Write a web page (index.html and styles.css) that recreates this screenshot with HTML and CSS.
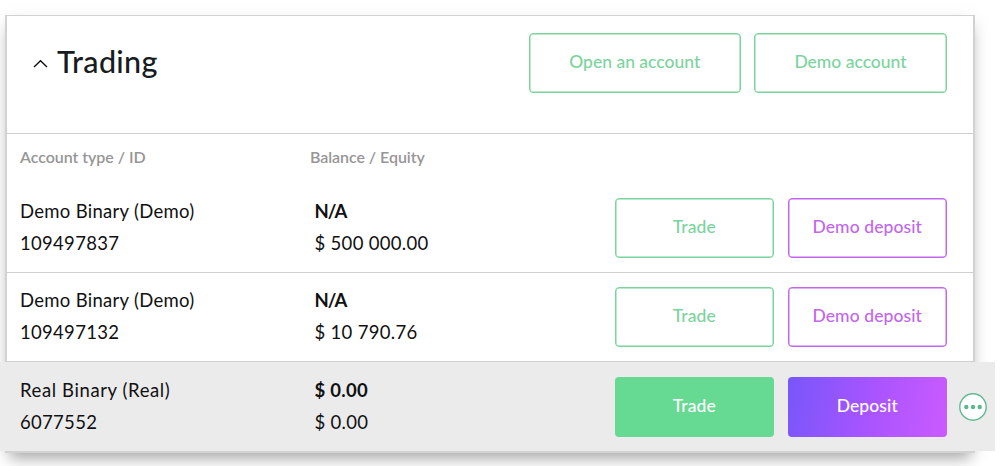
FILE: index.html
```html
<!DOCTYPE html>
<html lang="en">
<head>
<meta charset="UTF-8" />
<meta name="viewport" content="width=device-width, initial-scale=1.0"/>
<title>Trading</title>
<link rel="stylesheet" href="styles.css">
</head>
<body>
<section class="card">
    <header class="card-header">
        <svg class="chevron" width="15" height="9" viewBox="0 0 15 9"><path d="M1 8 L7.5 1.8 L14 8" fill="none" stroke="#111" stroke-width="1.4"/></svg>
        <h1>Trading</h1>
        <button class="btn green open">Open an account</button>
        <button class="btn green demo">Demo account</button>
    </header>
    <div class="labels">
        <span class="label-type">Account type / ID</span>
        <span class="label-balance">Balance / Equity</span>
    </div>
    <div class="row">
        <div class="account"><span class="name">Demo Binary (Demo)</span><br>109497837</div>
        <div class="balance"><b class="na">N/A</b><br>$ 500 000.00</div>
        <button class="btn green">Trade</button>
        <button class="btn purple">Demo deposit</button>
    </div>
    <div class="row second">
        <div class="account"><span class="name">Demo Binary (Demo)</span><br>109497132</div>
        <div class="balance"><b class="na">N/A</b><br>$ 10 790.76</div>
        <button class="btn green">Trade</button>
        <button class="btn purple">Demo deposit</button>
    </div>
    <div class="row active">
        <div class="account"><span class="name real">Real Binary (Real)</span><br>6077552</div>
        <div class="balance"><b>$ 0.00</b><br>$ 0.00</div>
        <button class="btn green-fill">Trade</button>
        <button class="btn gradient">Deposit</button>
        <svg class="more" width="28" height="28" viewBox="0 0 28 28">
            <circle cx="14" cy="14" r="13.2" fill="#fff" stroke="#62b892" stroke-width="1.4"/>
            <g fill="#5db890">
                <circle cx="7.3" cy="14" r="2.2"/>
                <circle cx="14" cy="14" r="2.2"/>
                <circle cx="20.7" cy="14" r="2.2"/>
            </g>
        </svg>
    </div>
</section>
</body>
</html>
```

FILE: styles.css
```css
* {
    box-sizing: border-box;
}
body {
    margin: 0;
    padding: 15px 25px 0 5px;
    height: 466px;
    overflow: hidden;
    background-color: #fff;
    color: #111;
    font-family: Lato, sans-serif;
    font-size: 18.5px;
}
.card {
    width: 970px;
    height: 438px;
    border: 2px solid #d2d2d2;
    border-top-width: 1px;
    background-color: #fff;
    box-shadow: 0 4px 18px rgba(0, 0, 0, 0.08), 0 10px 14px -5px rgba(0, 0, 0, 0.3);
}
.card-header {
    display: flex;
    align-items: flex-start;
    height: 118px;
    padding: 17px 26px 0;
    border-bottom: 1px solid #d0d0d0;
}
.chevron {
    margin: 26px 9px 0 0;
}
h1 {
    margin: 8px auto 0 0;
    font-size: 30.5px;
    line-height: 40px;
    font-weight: 500;
    color: #171c21;
    letter-spacing: 0.3px;
}
.btn {
    width: 159.5px;
    height: 60px;
    margin: 0 0 0 13.5px;
    padding: 0 0 3px;
    border: 1px solid;
    border-radius: 4px;
    background: none;
    box-shadow: inset 0 0 0 0.5px;
    font-family: inherit;
    font-size: 17.5px;
    font-weight: 500;
    letter-spacing: 0.1px;
}
.open {
    width: 212.5px;
    letter-spacing: 0;
}
.demo {
    width: 193px;
    margin-left: 13px;
    letter-spacing: 0;
}
.green {
    color: #7bd49d;
}
.purple {
    color: #c266ee;
}
.green-fill {
    border: 0;
    box-shadow: none;
    background-color: #66d993;
    color: #fff;
}
.gradient {
    border: 0;
    box-shadow: none;
    background: linear-gradient(100deg, #7757fa, #a954ff 52%, #ca5bff);
    color: #fff;
}
.labels {
    display: flex;
    height: 49px;
    padding: 13px 13px 0;
    font-size: 16px;
    line-height: 20px;
    font-weight: 600;
    letter-spacing: -0.05px;
    color: #969696;
}
.label-type {
    width: 290px;
}
.row {
    display: flex;
    height: 90px;
    padding: 15px 26px 0 13px;
    border-bottom: 1px solid #d0d0d0;
    line-height: 31.5px;
}
.account {
    width: 295px;
    margin-top: -2px;
    letter-spacing: 0.3px;
}
.real {
    letter-spacing: 0.6px;
}
.balance {
    margin: -2px auto 0 -0.5px;
    letter-spacing: 0.3px;
}
.na {
    letter-spacing: -0.9px;
}
.second {
    height: 89px;
    padding-top: 14px;
}
/* hovered row sticks out of the card on both sides */
.active {
    height: 89px;
    margin: 0 -22px 0 -7px;
    padding: 15px 8px 0 20px;
    border: 0;
    background-color: #ebebeb;
}
.more {
    margin: 16px 0 0 12px;
}
```
